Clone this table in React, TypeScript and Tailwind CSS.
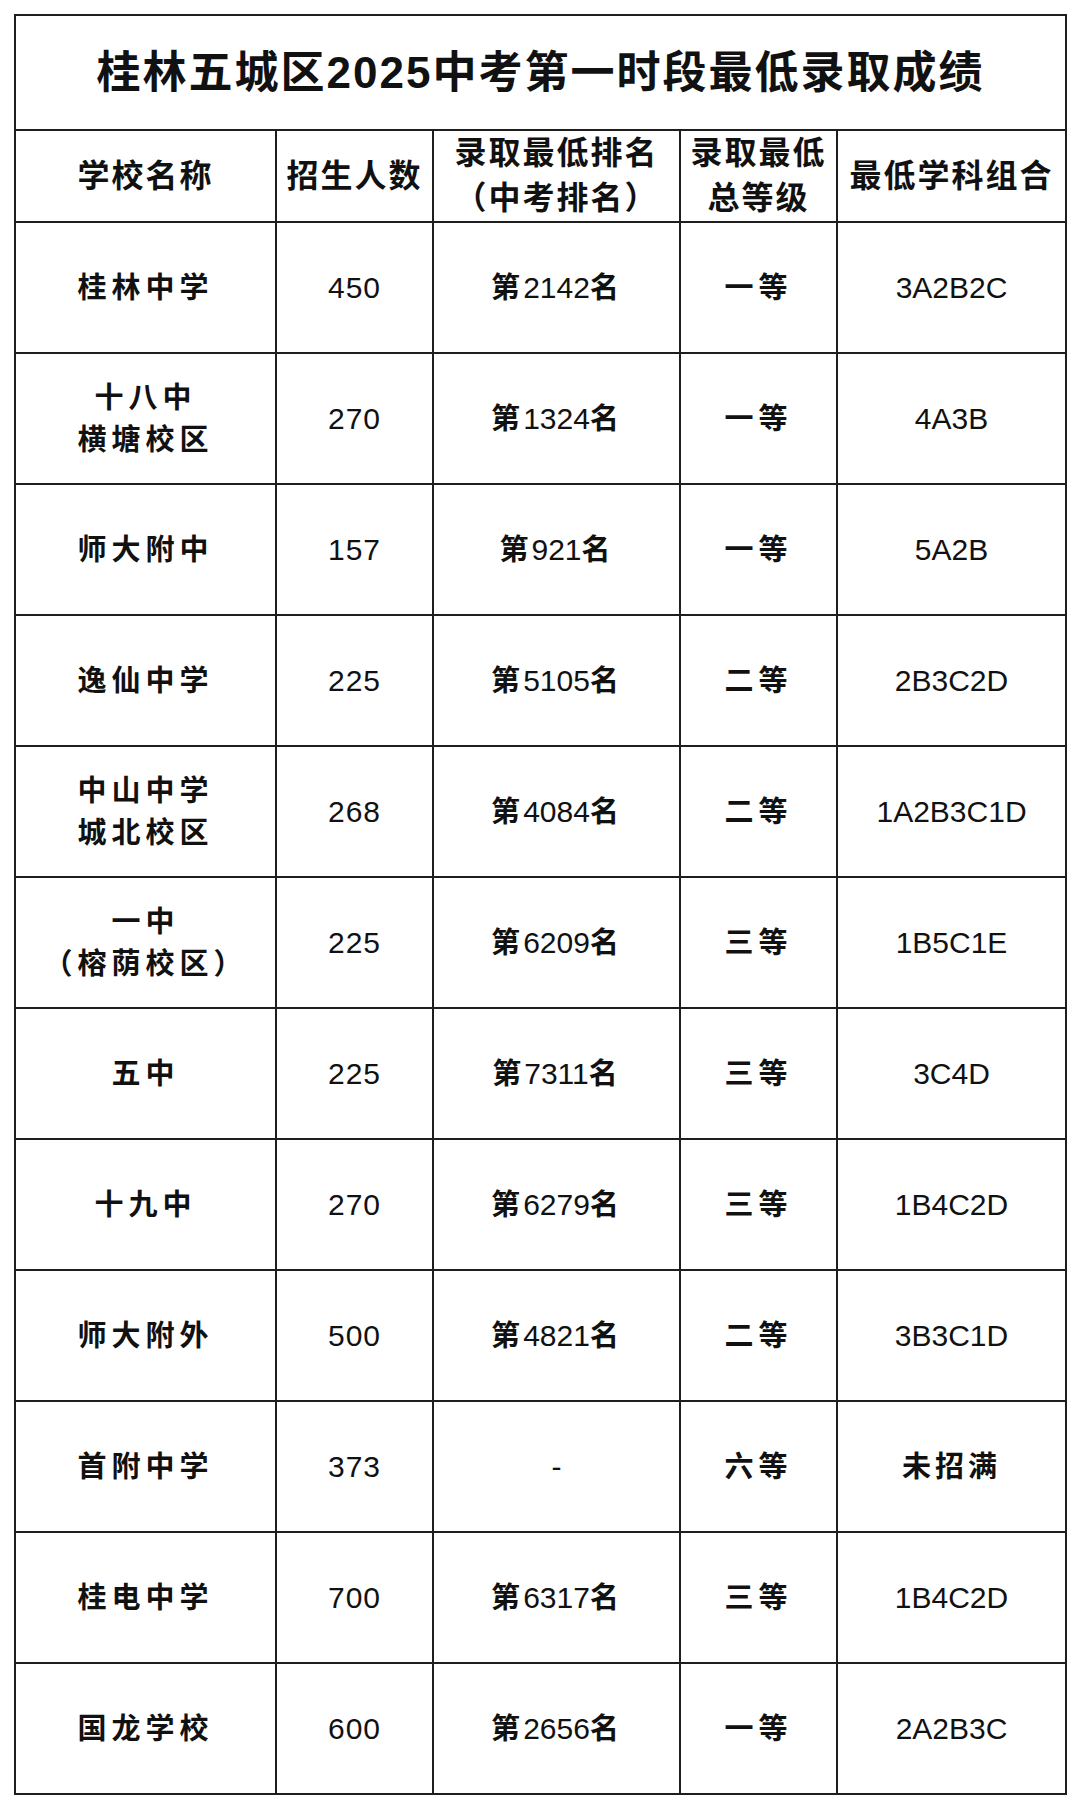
import { Fragment } from 'react';

// 2025 中考 first-batch admission cut-offs, Guilin five urban districts.
const rows = [
  { name: ['桂林中学'], quota: '450', rank: '第2142名', grade: '一等', combo: '3A2B2C' },
  { name: ['十八中', '横塘校区'], quota: '270', rank: '第1324名', grade: '一等', combo: '4A3B' },
  { name: ['师大附中'], quota: '157', rank: '第921名', grade: '一等', combo: '5A2B' },
  { name: ['逸仙中学'], quota: '225', rank: '第5105名', grade: '二等', combo: '2B3C2D' },
  { name: ['中山中学', '城北校区'], quota: '268', rank: '第4084名', grade: '二等', combo: '1A2B3C1D' },
  { name: ['一中', '（榕荫校区）'], quota: '225', rank: '第6209名', grade: '三等', combo: '1B5C1E' },
  { name: ['五中'], quota: '225', rank: '第7311名', grade: '三等', combo: '3C4D' },
  { name: ['十九中'], quota: '270', rank: '第6279名', grade: '三等', combo: '1B4C2D' },
  { name: ['师大附外'], quota: '500', rank: '第4821名', grade: '二等', combo: '3B3C1D' },
  { name: ['首附中学'], quota: '373', rank: '-', grade: '六等', combo: '未招满' },
  { name: ['桂电中学'], quota: '700', rank: '第6317名', grade: '三等', combo: '1B4C2D' },
  { name: ['国龙学校'], quota: '600', rank: '第2656名', grade: '一等', combo: '2A2B3C' },
];

// CJK runs get the heavier weight and wider spacing; digits/latin stay Arial-like.
function Txt({ text, cjk = 'text-[29px] tracking-[5px]' }: { text: string; cjk?: string }) {
  const parts = text.split(/([\u3000-\u9fff\uff00-\uffef]+)/).filter(Boolean);
  return (
    <>
      {parts.map((p, i) =>
        /[\u3000-\u9fff\uff00-\uffef]/.test(p) ? (
          <span key={i} className={`font-bold ${cjk}`}>
            {p}
          </span>
        ) : (
          <span key={i}>{p}</span>
        )
      )}
    </>
  );
}

const cell = 'flex flex-col items-center justify-center bg-white text-center';
const head = `${cell} h-[90px] text-[32px] leading-[45px] font-bold tracking-[2px]`;
const data = `${cell} h-[129px] text-[30px]`;

export default function App() {
  return (
    <div
      className="min-h-[1807px] w-[1080px] bg-white pl-[14px] pt-[14px] text-[#111]"
      style={{ fontFamily: '"Liberation Sans", "Noto Sans CJK SC", sans-serif' }}
    >
      <div className="grid w-[1053px] grid-cols-[259px_155px_245px_155px_227px] gap-[2px] bg-[#1e1e1e] p-[2px]">
        <div className={`${cell} col-span-5 h-[113px] text-[44px] font-bold tracking-[2px]`}>
          桂林五城区2025中考第一时段最低录取成绩
        </div>

        <div className={head}>学校名称</div>
        <div className={head}>招生人数</div>
        <div className={head}>
          <span>录取最低排名</span>
          <span>（中考排名）</span>
        </div>
        <div className={head}>
          <span>录取最低</span>
          <span>总等级</span>
        </div>
        <div className={head}>最低学科组合</div>

        {rows.map(r => (
          <Fragment key={r.name.join('')}>
            <div className={`${data} leading-[42px]`}>
              {r.name.map(n => (
                <span key={n}>
                  <Txt text={n} />
                </span>
              ))}
            </div>
            <div className={`${data} tracking-[1px]`}>{r.quota}</div>
            <div className={data}>
              <span>
                <Txt text={r.rank} cjk="text-[29px] tracking-[3px]" />
              </span>
            </div>
            <div className={data}>
              <span>
                <Txt text={r.grade} />
              </span>
            </div>
            <div className={data}>
              <span>
                <Txt text={r.combo} cjk="text-[29px] tracking-[4px]" />
              </span>
            </div>
          </Fragment>
        ))}
      </div>
    </div>
  );
}
